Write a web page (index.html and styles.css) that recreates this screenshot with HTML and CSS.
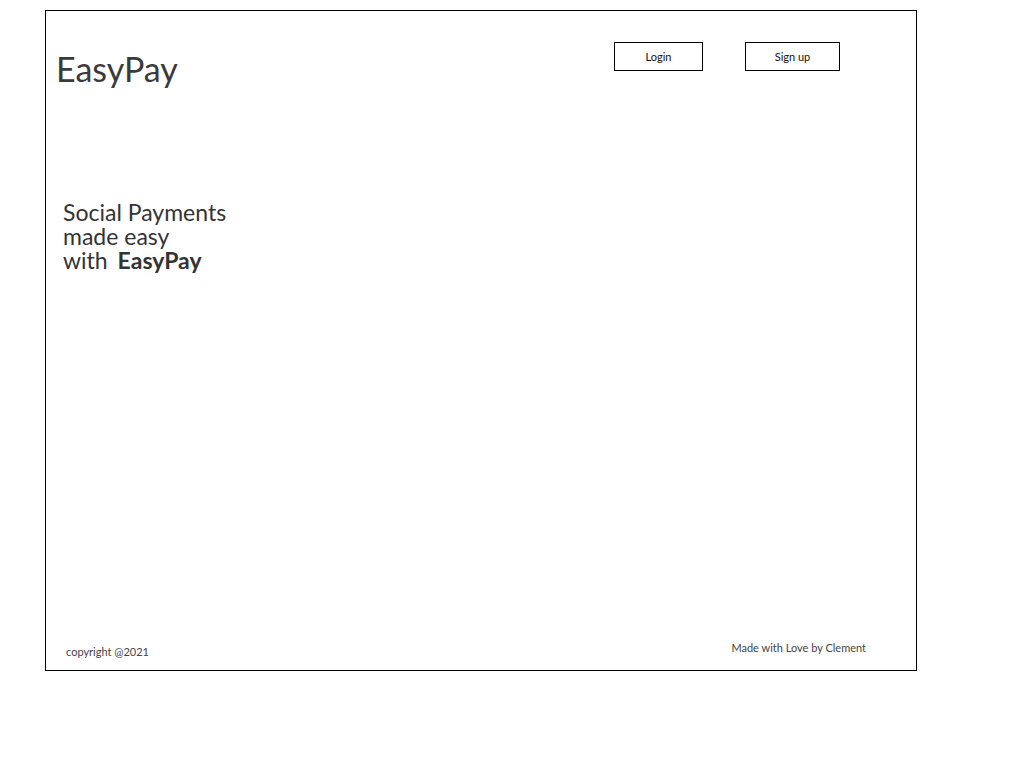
FILE: index.html
```html
<!DOCTYPE html>
<html lang="en">
<head>
<meta charset="utf-8">
<title>EasyPay</title>
<link rel="stylesheet" href="styles.css">
</head>
<body>
<div class="frame">
  <header class="topbar">
    <h1 class="brand">EasyPay</h1>
    <nav class="actions">
      <button class="btn btn-login">Login</button>
      <button class="btn btn-signup">Sign up</button>
    </nav>
  </header>
  <section class="hero">
    <p class="tagline">Social Payments<br>made easy<br>with <strong class="tag-brand">EasyPay</strong></p>
  </section>
  <footer class="footer">
    <span class="copyright">copyright @2021</span>
    <span class="credit">Made with Love by Clement</span>
  </footer>
</div>
</body>
</html>
```
FILE: styles.css
```css
* { box-sizing: border-box; }
html, body { margin: 0; padding: 0; background: #fff; }
body {
  font-family: Lato, "Open Sans", "Liberation Sans", sans-serif;
  color: #333;
}
.frame {
  margin: 10px 0 0 45px;
  width: 872px;
  height: 661px;
  border: 1px solid #000;
  display: flex;
  flex-direction: column;
}
.topbar {
  display: flex;
  justify-content: space-between;
  align-items: flex-start;
  padding: 31px 0 0 10px;
}
.brand {
  margin: 10px 0 0;
  font-size: 34px;
  font-weight: 400;
  line-height: 1;
  color: #3a3a3a;
}
.actions {
  display: flex;
  gap: 42px;
  margin-right: 76px;
}
.btn {
  font-family: inherit;
  font-size: 11px;
  color: #111;
  background: #fff;
  border: 1px solid #000;
  height: 29px;
  padding: 0;
}
.btn-login { width: 89px; }
.btn-signup { width: 95px; }
.hero {
  padding: 114px 0 0 17px;
  flex: 1;
}
.tagline {
  margin: 0;
  font-size: 23px;
  line-height: 24px;
  color: #333;
}
.tag-brand {
  font-weight: 700;
  margin-left: 4px;
}
.footer {
  display: flex;
  justify-content: space-between;
  align-items: flex-start;
  padding: 0 50px 12px 20px;
  font-size: 11px;
  color: #444;
}
.copyright { margin-top: 6px; }
.credit { margin-top: 2px; }
```
